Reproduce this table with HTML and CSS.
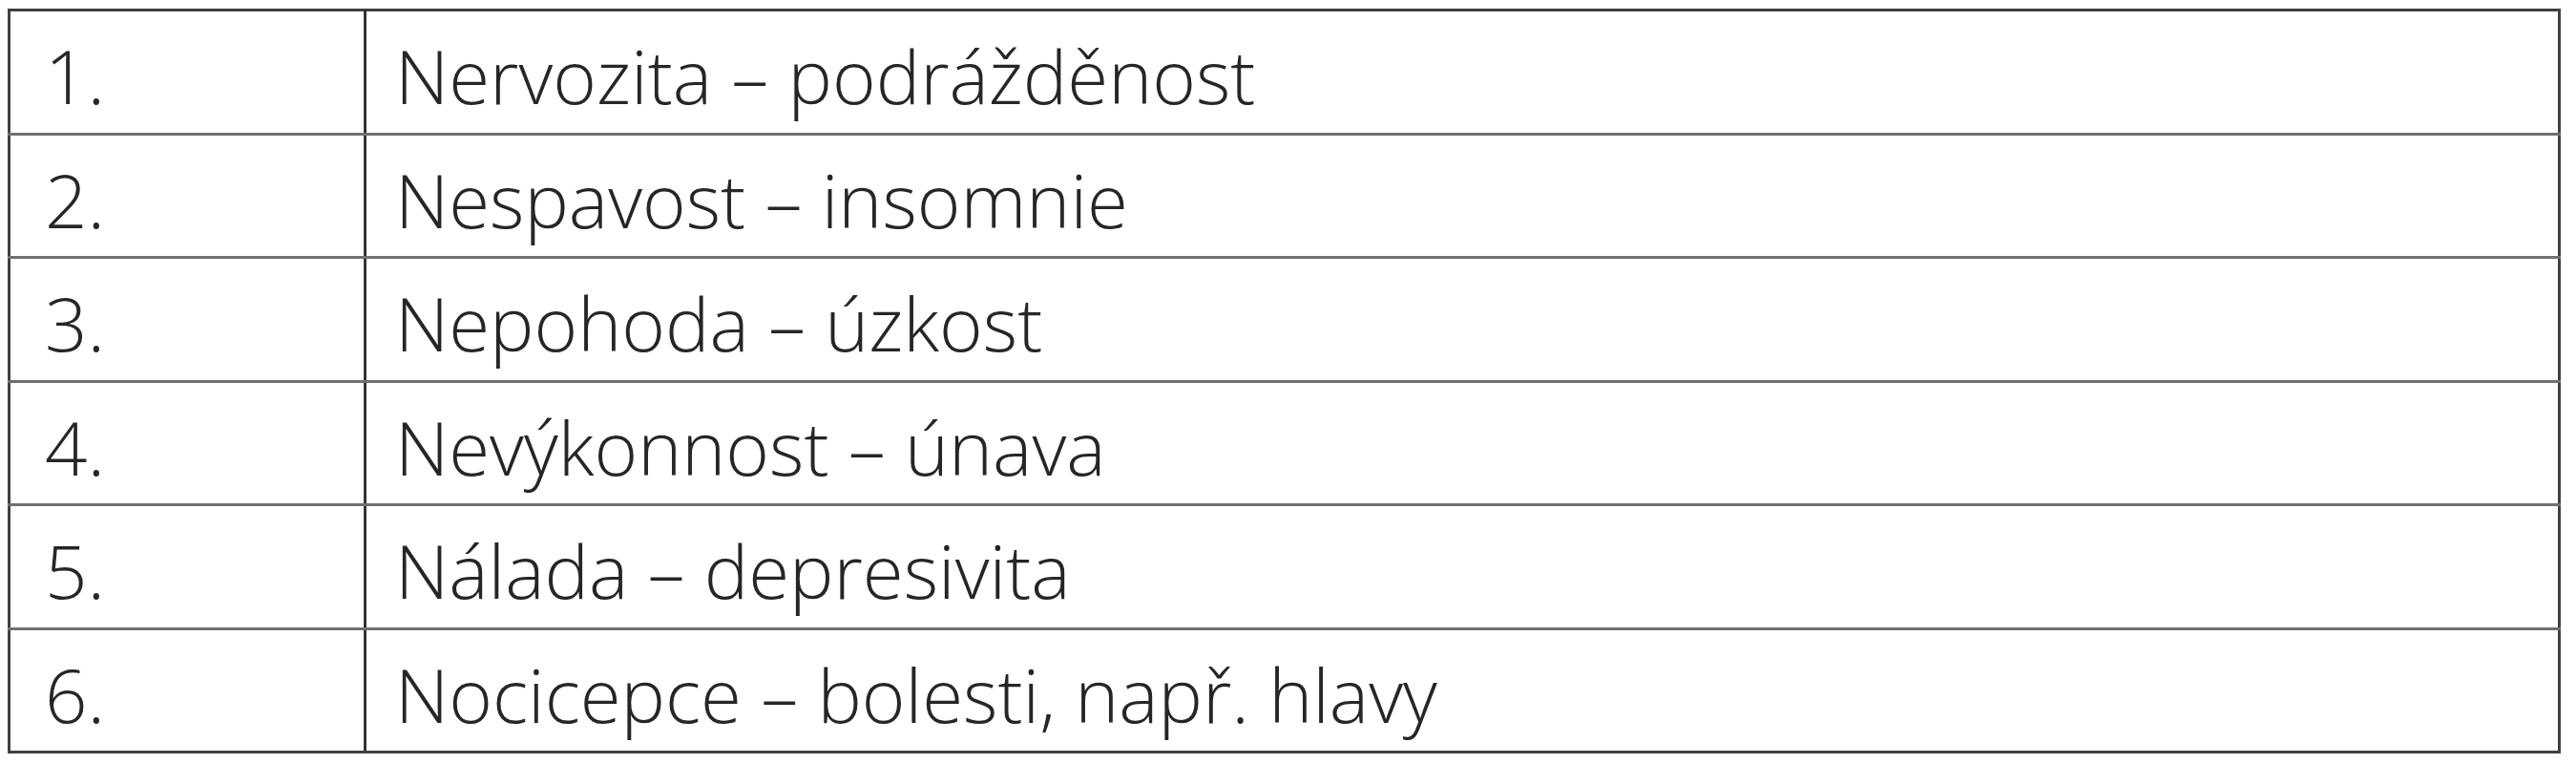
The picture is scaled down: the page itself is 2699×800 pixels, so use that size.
FILE: index.html
```html
<!DOCTYPE html>
<html lang="cs">
<head>
<meta charset="utf-8">
<title>Tabulka</title>
<link rel="stylesheet" href="styles.css">
</head>
<body>
<table class="list">
  <tr><td class="num">1.</td><td class="txt">Nervozita – podrážděnost</td></tr>
  <tr><td class="num">2.</td><td class="txt">Nespavost – insomnie</td></tr>
  <tr><td class="num">3.</td><td class="txt">Nepohoda – úzkost</td></tr>
  <tr><td class="num">4.</td><td class="txt">Nevýkonnost – únava</td></tr>
  <tr><td class="num">5.</td><td class="txt">Nálada – depresivita</td></tr>
  <tr><td class="num">6.</td><td class="txt">Nocicepce – bolesti, např. hlavy</td></tr>
</table>
</body>
</html>
```
FILE: styles.css
```css
html, body {
  background: #ffffff;
}
body {
  margin: 9px 0 0 8px;
  font-family: "Open Sans", "Noto Sans", sans-serif;
  font-weight: 300;
  color: #262626;
}
.list {
  border-collapse: collapse;
  width: 2675px;
  border: 3px solid #404040;
}
.list tr {
  height: 129.5px;
}
.list td {
  padding: 8px 0 0 0;
  border-top: 3px solid #707070;
  border-bottom: 3px solid #707070;
  font-size: 78px;
  line-height: 1;
  vertical-align: middle;
  white-space: nowrap;
}
.list tr:first-child td {
  border-top: 3px solid #404040;
}
.list tr:last-child td {
  border-bottom: 3px solid #404040;
}
.list td.num {
  width: 334px;
  padding-left: 36px;
  border-right: 3px solid #333333;
}
.list td.txt {
  padding-left: 30px;
}
```
